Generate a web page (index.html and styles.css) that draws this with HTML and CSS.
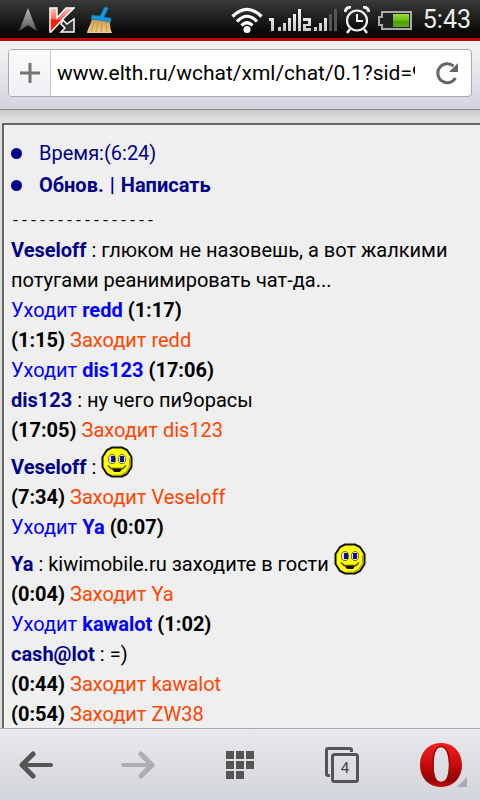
FILE: index.html
```
<!DOCTYPE html>
<html lang="ru">
<head>
    <meta charset="UTF-8">
    <meta name="viewport" content="width=device-width, initial-scale=1.0">
    <title>Чат</title>
    <link rel="stylesheet" href="styles.css">
</head>
<body>
    <!-- Shared drawings -->
    <svg class="defs" width="0" height="0" aria-hidden="true">
        <defs>
            <linearGradient id="metal" x1="0" y1="0" x2="0" y2="1"><stop offset="0" stop-color="#bbb"/><stop offset="1" stop-color="#555"/></linearGradient>
            <linearGradient id="kred" x1="0" y1="0" x2="0" y2="1"><stop offset="0" stop-color="#ffc0b8"/><stop offset=".45" stop-color="#f86a5c"/><stop offset=".5" stop-color="#f21b08"/><stop offset="1" stop-color="#f83010"/></linearGradient>
            <linearGradient id="straw" x1="0" y1="0" x2="0" y2="1"><stop offset="0" stop-color="#c99a55"/><stop offset="1" stop-color="#f3cf85"/></linearGradient>
            <linearGradient id="charge" x1="0" y1="0" x2="0" y2="1"><stop offset="0" stop-color="#9be032"/><stop offset=".5" stop-color="#6cb915"/><stop offset=".55" stop-color="#4f9f04"/><stop offset="1" stop-color="#5fae0c"/></linearGradient>
            <linearGradient id="bars" x1="0" y1="0" x2="0" y2="1"><stop offset="0" stop-color="#fff"/><stop offset="1" stop-color="#c8c8c8"/></linearGradient>
            <linearGradient id="opera" x1="0" y1="0" x2="0" y2="1"><stop offset="0" stop-color="#f82020"/><stop offset=".5" stop-color="#c80c0c"/><stop offset=".85" stop-color="#900000"/><stop offset="1" stop-color="#d01010"/></linearGradient>
            <symbol id="smile" viewBox="0 0 32 32">
                <path d="M11 1.500h10l5 2.500 4.500 7v10l-4.500 7-5 2.500H11L6 28l-4.500-7V11L6 4z" fill="#ff0" stroke="#111" stroke-width="2"/>
                <path d="M28.500 12v8l-3.500 6-5 3h-8" fill="none" stroke="#b8a800" stroke-width="1.200"/>
                <path d="M7.500 11.500l2-3h3l2 3v4l-2 2h-3l-2-2zM17.500 11.500l2-3h3l2 3v4l-2 2h-3l-2-2z" fill="#ddd" stroke="#77703a" stroke-width="1"/>
                <path d="M10 10h4v6h-4zM19 10h4v6h-4z" fill="#10108c"/>
                <path d="M7 19.500l3 3h12l3-3" fill="none" stroke="#554d00" stroke-width="1.500"/>
                <path d="M11 23h10l-2 3h-6z" fill="#111"/>
            </symbol>
        </defs>
    </svg>

    <div class="status-bar">
        <div class="notices">
            <svg width="20" height="26" viewBox="0 0 20 26"><path d="M10 1l9 23-9-6-9 6z" fill="url(#metal)"/></svg>
            <svg width="26" height="26" viewBox="0 0 26 26">
                <path d="M14 13l4 4 7-5v13H12l4-4-4-4z" fill="#333" stroke="#fff" stroke-width="1.500"/>
                <path d="M1 1h7v10L17 1h8L13 13 2 25H1z" fill="url(#kred)" stroke="#fff" stroke-width="1.500"/>
            </svg>
            <svg width="26" height="28" viewBox="0 0 26 28">
                <path d="M6 13l18 1c0 5 0 9 2 13H1c1-5 3-7 5-14z" fill="url(#straw)"/>
                <path d="M8 16l-3 10M12 16l-2 10M16 16l-1 10M20 16l1 10" stroke="#b98b48" stroke-width=".8"/>
                <path d="M6 9l8 1 4-8c1-2 5-1 4 1l-4 8 7 1v4L5 13z" fill="#1496e0" stroke="#0a67a8" stroke-width=".6"/>
            </svg>
        </div>
        <div class="indicators">
            <svg width="32" height="27" viewBox="0 0 32 27" fill="none" stroke="#fff" stroke-width="3.2">
                <path d="M1.500 9.500Q16-5 30.500 9.500M6 14.500Q16 4 26 14.500M10.500 18.500Q16 13 21.500 18.500"/>
                <circle cx="16" cy="22.500" r="3.500" fill="#fff" stroke="none"/>
            </svg>
            <svg width="69" height="23" viewBox="0 0 69 23">
                <path d="M0 9h5v13H2V12H0zM9 18h3v4H9zM14 14h3v8h-3zM19 9h3v13h-3zM24 5h3v17h-3zM29 0h3v22h-3zM34 9h8v8h-5v2h5v3h-8v-7h5v-3h-5zM45 18h3v4h-3zM50 14h3v8h-3zM55 9h3v13h-3z" fill="url(#bars)"/>
                <path d="M60 5h3v17h-3zM65 0h3v22h-3z" fill="#555"/>
            </svg>
            <svg width="26" height="28" viewBox="0 0 26 28" fill="none" stroke="#f2f2f2">
                <circle cx="13" cy="14.500" r="10" stroke-width="2.200"/>
                <path d="M13 8v7h6" stroke-width="2"/>
                <path d="M1 6Q2 1 7 1M19 1q5 0 6 5" stroke-width="3"/>
                <path d="M6 23l-3 4M20 23l3 4" stroke-width="2.500"/>
            </svg>
            <svg class="battery" width="34" height="19" viewBox="0 0 34 19">
                <path d="M4 1h29v17H4v-4H1V6h3z" fill="#222" stroke="#aaa" stroke-width="2"/>
                <path d="M15 3h16v13H15z" fill="url(#charge)"/>
            </svg>
            <span class="clock">5:43</span>
        </div>
    </div>

    <header class="toolbar">
        <form class="address">
            <button type="button" class="add" aria-label="Добавить">
                <svg width="20" height="20" viewBox="0 0 20 20"><path d="M10 0v20M0 10h20" stroke="#737373" stroke-width="3"/></svg>
            </button>
            <input type="text" class="url" aria-label="Адрес" value="www.elth.ru/wchat/xml/chat/0.1?sid=9">
            <button type="button" class="reload" aria-label="Обновить">
                <svg width="24" height="24" viewBox="0 0 24 24"><path d="M20.500 17A9.500 9.500 0 1 1 18.500 5" fill="none" stroke="#666" stroke-width="3"/><path d="M23 2v9h-9z" fill="#666"/></svg>
            </button>
        </form>
    </header>

    <main class="page">
        <div class="chat">
            <ul class="menu">
                <li>Время:(6:24)</li>
                <li><a href="#refresh">Обнов.</a> <b>|</b> <a href="#write">Написать</a></li>
            </ul>
            <p class="dashes">----------------</p>
            <p><b class="nick">Veseloff</b> : глюком не назовешь, а вот жалкими потугами реанимировать чат-да...</p>
            <p class="out">Уходит <b>redd</b> <b class="time">(1:17)</b></p>
            <p class="in"><b class="time">(1:15)</b> Заходит redd</p>
            <p class="out">Уходит <b>dis123</b> <b class="time">(17:06)</b></p>
            <p><b class="nick">dis123</b> : ну чего пи9орасы</p>
            <p class="in"><b class="time">(17:05)</b> Заходит dis123</p>
            <p><b class="nick">Veseloff</b> : <svg class="smile"><use href="#smile"/></svg></p>
            <p class="in"><b class="time">(7:34)</b> Заходит Veseloff</p>
            <p class="out">Уходит <b>Ya</b> <b class="time">(0:07)</b></p>
            <p><b class="nick">Ya</b> : kiwimobile.ru заходите в гости <svg class="smile"><use href="#smile"/></svg></p>
            <p class="in"><b class="time">(0:04)</b> Заходит Ya</p>
            <p class="out">Уходит <b>kawalot</b> <b class="time">(1:02)</b></p>
            <p><b class="nick">cash@lot</b> : =)</p>
            <p class="in"><b class="time">(0:44)</b> Заходит kawalot</p>
            <p class="in"><b class="time">(0:54)</b> Заходит ZW38</p>
        </div>
    </main>

    <nav class="bottom-bar">
        <button type="button" aria-label="Назад">
            <svg width="34" height="28" viewBox="0 0 34 28" fill="none" stroke="#555" stroke-linecap="round"><path d="M3 14h29" stroke-width="4"/><path d="M14 3L3 14l11 11" stroke-width="5" stroke-linejoin="round"/></svg>
        </button>
        <button type="button" aria-label="Вперёд" disabled>
            <svg width="34" height="28" viewBox="0 0 34 28" fill="none" stroke="#adaeb1" stroke-linecap="round"><path d="M2 14h29" stroke-width="4"/><path d="M20 3l11 11-11 11" stroke-width="5" stroke-linejoin="round"/></svg>
        </button>
        <button type="button" aria-label="Экспресс-панель">
            <svg width="28" height="28" viewBox="0 0 28 28" fill="#555"><path d="M0 0h8v8H0zM10 0h8v8h-8zM20 0h8v8h-8zM0 10h8v8H0zM10 10h8v8h-8zM20 10h8v8h-8zM0 20h8v8H0zM10 20h8v8h-8z"/></svg>
        </button>
        <button type="button" class="tabs" aria-label="Вкладки: 4">
            <svg width="34" height="36" viewBox="0 0 34 36" fill="none" stroke="#555"><path d="M5 28.500H3Q1.500 28.500 1.500 27V3Q1.500 1.500 3 1.500h22q1.500 0 1.500 1.500v2" stroke-width="3"/><rect x="7.500" y="7.500" width="25" height="27" rx="2" stroke-width="3"/></svg>
            <span class="count">4</span>
        </button>
        <button type="button" class="opera" aria-label="Меню Opera">
            <svg width="48" height="44" viewBox="0 0 48 44">
                <path fill-rule="evenodd" d="M21 0C33 0 42 9 42 22S33 44 21 44 0 35 0 22 9 0 21 0zm0 4C16 4 13.500 11 13.500 22S16 39 21 39s8-6 8-17S26 4 21 4z" fill="url(#opera)"/>
                <path d="M21 3.500C15.500 3.500 13 11 13 22s2.500 17.500 8 17.500S29.500 33 29.500 22 26.500 3.500 21 3.500z" fill="none" stroke="#a00808" stroke-width="1.500"/>
                <path d="M47 34v10H37z" fill="#a9acb8"/>
            </svg>
        </button>
    </nav>
</body>
</html>
```

FILE: styles.css
```
* {
    box-sizing: border-box;
}

body {
    margin: 0;
    height: 100vh;
    display: flex;
    flex-direction: column;
    overflow: hidden;
    font-family: Roboto, sans-serif;
    font-size: 20px;
    line-height: 30px;
    color: #000;
}

svg {
    display: block;
    flex: none;
}

.defs {
    position: absolute;
}

button {
    display: flex;
    align-items: center;
    justify-content: center;
    padding: 0;
    border: none;
    background: none;
    font: inherit;
}

/* Phone status bar */
.status-bar {
    flex: none;
    height: 41px;
    display: flex;
    align-items: center;
    justify-content: space-between;
    padding: 2px 9px 0 18px;
    background: linear-gradient(#3a3a38, #000);
    border-bottom: 3px solid #bd0000;
}

.notices {
    display: flex;
    align-items: center;
    gap: 11px;
}

.indicators {
    display: flex;
    align-items: center;
    gap: 6px;
}

.battery {
    margin-left: 2px;
}

.clock {
    margin-left: 5px;
    font-size: 25px;
    color: #eee;
}

/* Address bar */
.toolbar {
    flex: none;
    padding: 8px 8px 12px;
    background: linear-gradient(#f6f6f6, #d2d3de);
    border-bottom: 1px solid #85888c;
}

.address {
    display: flex;
    height: 48px;
    margin: 0;
    background: #fff;
    border: 1px solid #aaa;
    border-radius: 4px;
    overflow: hidden;
}

.add {
    width: 42px;
    background: linear-gradient(#fafafa, #f0f0f5);
    border-right: 1px solid #c6c7d4;
}

.url {
    flex: 1;
    min-width: 0;
    padding: 0;
    margin-left: 6px;
    border: none;
    outline: none;
    background: none;
    font: inherit;
    font-size: 21px;
    color: #000;
}

.reload {
    width: 56px;
    padding-left: 8px;
}

/* Chat page */
.page {
    flex: 1;
    min-height: 0;
    overflow: hidden;
    padding: 13px 0 0 2px;
    background: linear-gradient(#c8c8c8, #dededc 8px);
}

.chat {
    min-height: 100%;
    padding: 12px 7px;
    background: #efefef;
    border: 2px solid #666;
    border-right: none;
}

.menu {
    margin: 0;
    padding: 0;
    list-style: none;
    color: #00008b;
}

.menu li {
    display: flex;
    align-items: center;
    gap: 6px;
    height: 32px;
}

.menu li::before {
    content: "";
    width: 11px;
    height: 11px;
    margin-right: 11px;
    border-radius: 50%;
    background: #00008b;
}

.menu a {
    color: #00008b;
    font-weight: bold;
    text-decoration: none;
}

.chat p {
    margin: 0;
}

.chat .dashes {
    height: 34px;
    padding-top: 6px;
    font-family: "Liberation Mono", monospace;
    font-size: 15px;
}

.nick {
    color: #00008b;
}

.out {
    color: #00f;
}

.in {
    color: #ff4500;
}

.time {
    color: #000;
}

.smile {
    display: inline-block;
    width: 32px;
    height: 32px;
    margin-top: 1px;
    vertical-align: -4px;
}

/* Browser buttons */
.bottom-bar {
    flex: none;
    height: 72px;
    display: flex;
    align-items: center;
    justify-content: space-between;
    padding: 0 12px;
    background: linear-gradient(#e8e9ee, #d9dade 75%, #d2d5e0);
    border-top: 1px solid #a8a8aa;
}

.bottom-bar button {
    width: 48px;
    height: 48px;
}

.tabs {
    position: relative;
}

.count {
    position: absolute;
    left: 6px;
    right: 0;
    top: 12px;
    font-size: 15px;
    color: #444;
}
```
